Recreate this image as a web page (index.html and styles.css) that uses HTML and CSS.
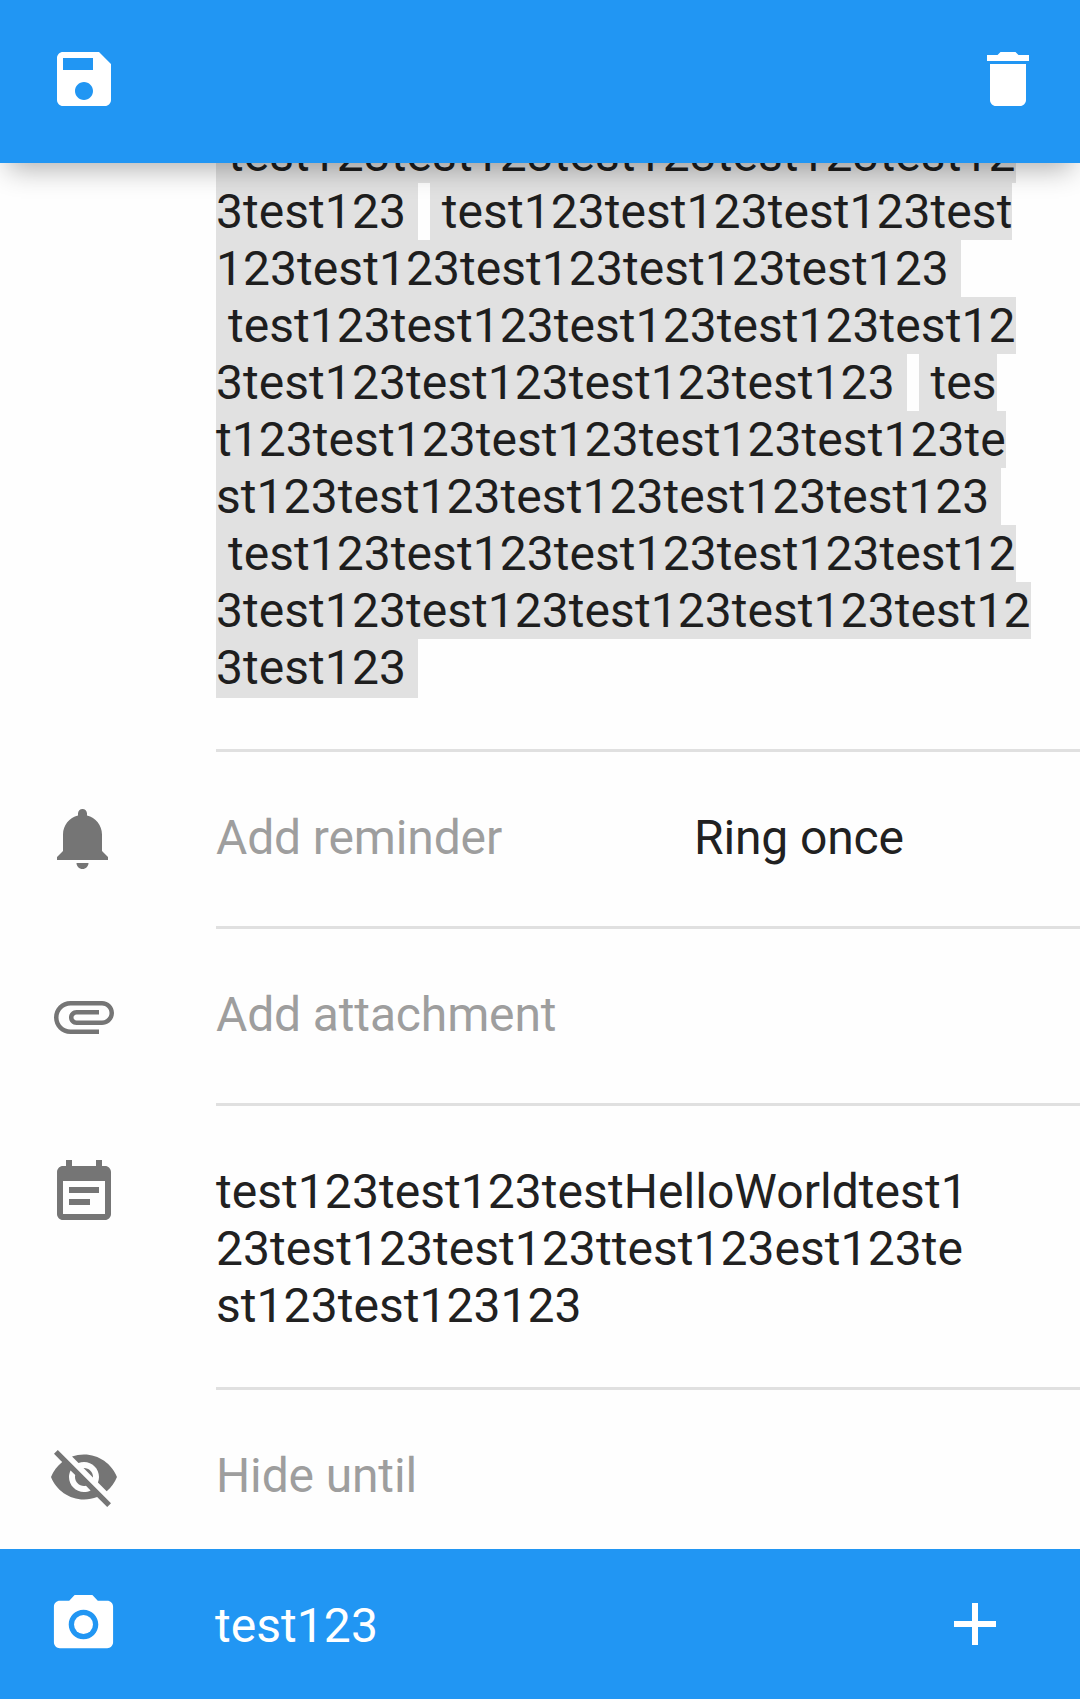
FILE: index.html
```html
<!DOCTYPE html>
<html lang="en">
<head>
<meta charset="utf-8">
<title>Edit task</title>
<link rel="stylesheet" href="styles.css">
</head>
<body>
<div class="screen">
  <header class="toolbar">
    <svg class="icon" viewBox="0 0 24 24"><path d="M17 3H5c-1.11 0-2 .9-2 2v14c0 1.1.89 2 2 2h14c1.1 0 2-.9 2-2V7l-4-4zm-5 16c-1.66 0-3-1.34-3-3s1.34-3 3-3 3 1.34 3 3-1.34 3-3 3zm3-10H5V5h10v4z"/></svg>
    <svg class="icon" viewBox="0 0 24 24"><path d="M6 19c0 1.1.9 2 2 2h8c1.1 0 2-.9 2-2V7H6v12zM19 4h-3.5l-1-1h-5l-1 1H5v2h14V4z"/></svg>
  </header>

  <main class="content">
    <section class="row row-tags">
      <div class="row-icon"></div>
      <div class="row-body tags">
        <div class="line"><span class="tag"> test123test123test123test123test12</span></div>
        <div class="line"><span class="tag">3test123 </span><span class="gap"> </span><span class="tag"> test123test123test123test</span></div>
        <div class="line"><span class="tag">123test123test123test123test123 </span></div>
        <div class="line"><span class="tag"> test123test123test123test123test12</span></div>
        <div class="line"><span class="tag">3test123test123test123test123 </span><span class="gap"> </span><span class="tag"> tes</span></div>
        <div class="line"><span class="tag">t123test123test123test123test123te</span></div>
        <div class="line"><span class="tag">st123test123test123test123test123 </span></div>
        <div class="line"><span class="tag"> test123test123test123test123test12</span></div>
        <div class="line"><span class="tag">3test123test123test123test123test12</span></div>
        <div class="line"><span class="tag tag-end">3test123 </span></div>
      </div>
    </section>

    <section class="row">
      <div class="row-icon"><svg class="icon" viewBox="0 0 24 24"><path d="M11.5 22c1.1 0 2-.9 2-2h-4c0 1.1.9 2 2 2zm6.5-6v-5.5c0-3.07-2.13-5.64-5-6.32V3.5c0-.83-.67-1.5-1.5-1.5S10 2.67 10 3.5v.68c-2.87.68-5 3.25-5 6.32V16l-2 2v1h17v-1l-2-2z"/></svg></div>
      <div class="row-body reminder"><span class="hint">Add reminder</span><span>Ring once</span></div>
    </section>

    <section class="row">
      <div class="row-icon"><svg class="icon" viewBox="0 0 24 24"><path d="M7.5 18C4.46 18 2 15.54 2 12.5S4.46 7 7.5 7H18c2.21 0 4 1.79 4 4s-1.79 4-4 4H9.5C8.12 15 7 13.88 7 12.5S8.12 10 9.5 10H17v1.5H9.5c-.55 0-1 .45-1 1s.45 1 1 1H18c1.38 0 2.5-1.12 2.5-2.5S19.38 8.5 18 8.5H7.5c-2.21 0-4 1.79-4 4s1.79 4 4 4H17V18H7.5z"/></svg></div>
      <div class="row-body hint">Add attachment</div>
    </section>

    <section class="row">
      <div class="row-icon"><svg class="icon" viewBox="0 0 24 24"><path d="M17 10H7v2h10v-2zm2-7h-1V1h-2v2H8V1H6v2H5c-1.11 0-1.99.9-1.99 2L3 19c0 1.1.89 2 2 2h14c1.1 0 2-.9 2-2V5c0-1.1-.9-2-2-2zm0 16H5V8h14v11zm-5-5H7v2h7v-2z"/></svg></div>
      <div class="row-body description">test123test123testHelloWorldtest1<br>23test123test123ttest123est123te<br>st123test123123</div>
    </section>

    <section class="row row-last">
      <div class="row-icon"><svg class="icon" viewBox="0 0 24 24"><path d="M12 7c2.76 0 5 2.24 5 5 0 .65-.13 1.26-.36 1.83l2.92 2.92c1.51-1.26 2.7-2.89 3.43-4.75-1.73-4.39-6-7.5-11-7.5-1.4 0-2.74.25-3.98.7l2.16 2.16C10.74 7.13 11.35 7 12 7zM2 4.27l2.28 2.28.46.46C3.08 8.3 1.78 10.02 1 12c1.73 4.39 6 7.5 11 7.5 1.55 0 3.03-.3 4.38-.84l.42.42L19.73 22 21 20.73 3.27 3 2 4.27zM7.53 9.8l1.55 1.55c-.05.21-.08.43-.08.65 0 1.66 1.34 3 3 3 .22 0 .44-.03.65-.08l1.55 1.55c-.67.33-1.41.53-2.2.53-2.76 0-5-2.24-5-5 0-.79.2-1.53.53-2.2zm4.31-.78l3.15 3.15.02-.16c0-1.66-1.34-3-3-3l-.17.01z"/></svg></div>
      <div class="row-body hint">Hide until</div>
    </section>
  </main>

  <footer class="comment-bar">
    <svg class="icon icon-camera" viewBox="0 0 24 24"><circle cx="12" cy="12" r="3.2"/><path d="M9 2L7.17 4H4c-1.1 0-2 .9-2 2v12c0 1.1.9 2 2 2h16c1.1 0 2-.9 2-2V6c0-1.1-.9-2-2-2h-3.17L15 2H9zm3 15c-2.76 0-5-2.24-5-5s2.24-5 5-5 5 2.24 5 5-2.24 5-5 5z"/></svg>
    <span class="comment">test123</span>
    <svg class="icon" viewBox="0 0 24 24"><path d="M19 13h-6v6h-2v-6H5v-2h6V5h2v6h6v2z"/></svg>
  </footer>
</div>
</body>
</html>
```
FILE: styles.css
```css
* {
  box-sizing: border-box;
}

body {
  margin: 0;
  background: #fefefe;
  color: #212121;
  font: 48px/57px Roboto, "Liberation Sans", sans-serif;
  letter-spacing: 0.05px;
}

.screen {
  display: flex;
  flex-direction: column;
  height: 1699px;
  overflow: hidden;
}

.icon {
  display: block;
  flex: none;
  width: 72px;
  height: 72px;
  fill: currentColor;
}

.toolbar {
  position: relative;
  z-index: 1;
  display: flex;
  flex: none;
  justify-content: space-between;
  height: 163px;
  padding: 43px 36px 0 48px;
  background: #2196f3;
  color: #fff;
  box-shadow: 0 14px 26px -8px rgba(0, 0, 0, 0.31);
}

.content {
  flex: 1;
  min-height: 0;
  overflow: hidden;
}

.row {
  display: flex;
}

/* The tag list is scrolled partly under the toolbar. */
.row-tags {
  margin-top: -37px;
}

.row-icon {
  flex: none;
  width: 216px;
  padding: 51px 0 0 48px;
  color: #757575;
}

.row-body {
  flex: 1;
  padding: 57px 0 60px;
  border-bottom: 3px solid #e0e0e0;
  white-space: nowrap;
}

.row-last .row-body {
  border-bottom: 0;
}

.tags {
  padding: 0 0 53px;
  color: #1e1e1e;
}

.line {
  display: flex;
  height: 57px;
  white-space: pre;
}

.tag {
  background: #e1e1e1;
}

.tag-end {
  height: 59px;
}

.hint {
  color: #9e9e9e;
  letter-spacing: -0.14px;
}

.reminder {
  display: grid;
  grid-template-columns: 478px 1fr;
  letter-spacing: -0.14px;
}

.description {
  padding-bottom: 53px;
}

.comment-bar {
  display: flex;
  flex: none;
  height: 150px;
  padding: 39px 69px 0 48px;
  background: #2196f3;
  color: #fff;
}

.icon-camera {
  width: 71px;
  height: 71px;
  margin-top: 0.5px;
}

.comment {
  flex: 1;
  padding: 9px 0 0 96px;
}
```
